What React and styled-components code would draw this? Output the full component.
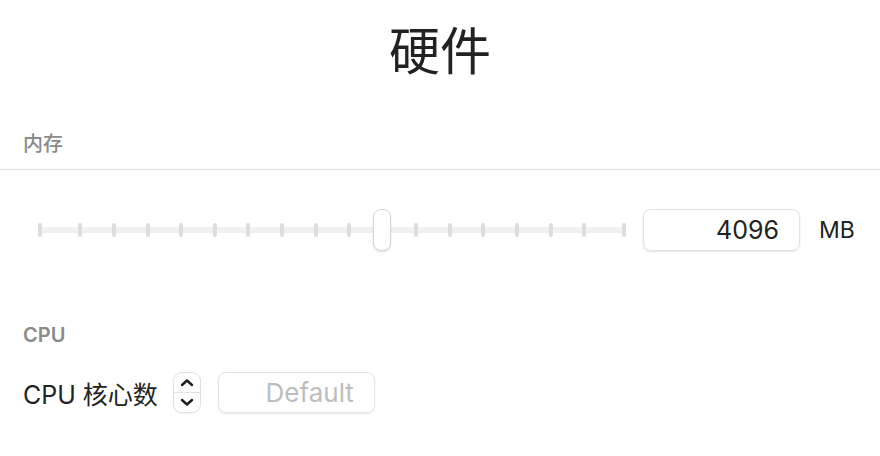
import React from 'react';
import styled, { createGlobalStyle } from 'styled-components';

const GlobalStyle = createGlobalStyle`
    html, body {
        margin:0;
        padding:0;
        background:#ffffff;
    }
    body {
        font-family:"Inter", "Noto Sans CJK SC", sans-serif;
        color:#222222;
    }
`

// tick positions on the memory slider, relative to the track start
const TICKS = [0, 40, 74, 108, 141, 175, 208, 242, 276, 309, 376, 410, 443, 477, 511, 544, 584];

function App() {
    return (
        <Page>
            <GlobalStyle />
            <Title>硬件</Title>

            <SectionHeader>内存</SectionHeader>
            <Divider />
            <SliderRow>
                <Slider>
                    <Track />
                    {TICKS.map((x) => (
                        <Tick key={x} style={{ left: x }} />
                    ))}
                    <Thumb />
                </Slider>
                <ValueBox>4096</ValueBox>
                <Unit>MB</Unit>
            </SliderRow>

            <SectionHeader cpu>CPU</SectionHeader>
            <FieldRow>
                <FieldLabel>CPU 核心数</FieldLabel>
                <Stepper>
                    <StepButton>
                        <svg width="14" height="9" viewBox="0 0 14 9">
                            <path d="M2 7 L7 2.5 L12 7" fill="none" stroke="#1e1e1e" strokeWidth="2.4" strokeLinecap="round" strokeLinejoin="round" />
                        </svg>
                    </StepButton>
                    <StepButton bottom>
                        <svg width="14" height="9" viewBox="0 0 14 9">
                            <path d="M2 2 L7 6.5 L12 2" fill="none" stroke="#1e1e1e" strokeWidth="2.4" strokeLinecap="round" strokeLinejoin="round" />
                        </svg>
                    </StepButton>
                </Stepper>
                <PlaceholderBox>Default</PlaceholderBox>
            </FieldRow>
        </Page>
    )
}

export default App;

const Page = styled.div`
    width:880px;
    height:456px;
    overflow:hidden;
    display:flex;
    flex-direction:column;
`

const Title = styled.h1`
    margin:21px 0 0;
    text-align:center;
    font-size:51px;
    font-weight:400;
    line-height:62px;
    color:#222;
`

const SectionHeader = styled.div`
    margin:${(p) => (p.cpu ? '72px' : '49px')} 0 0 23px;
    font-size:20px;
    line-height:24px;
    font-weight:${(p) => (p.cpu ? 600 : 500)};
    color:#8a8a8a;
`

const Divider = styled.div`
    margin-top:13px;
    height:1px;
    background:#dcdcdc;
`

const SliderRow = styled.div`
    display:flex;
    align-items:center;
    margin-top:39px;
    padding-left:38px;
`

const Slider = styled.div`
    position:relative;
    width:588px;
    height:42px;
`

const Track = styled.div`
    position:absolute;
    left:0;
    right:0;
    top:18px;
    height:6px;
    background:#f0f0f0;
`

const Tick = styled.div`
    position:absolute;
    top:14px;
    width:4px;
    height:14px;
    border-radius:2px;
    background:#dddddd;
`

const Thumb = styled.div`
    position:absolute;
    left:335px;
    top:0;
    width:16px;
    height:40px;
    border-radius:8px;
    background:#fff;
    border:1px solid #d6d6d6;
    box-shadow:0 1px 2px rgba(0,0,0,0.12);
`

const ValueBox = styled.div`
    margin-left:17px;
    width:135px;
    height:40px;
    padding-right:20px;
    border:1px solid #e2e2e2;
    border-radius:8px;
    box-shadow:0 1px 2px rgba(0,0,0,0.12);
    display:flex;
    align-items:center;
    justify-content:flex-end;
    font-size:25px;
    color:#222;
`

const Unit = styled.div`
    margin-left:19px;
    font-size:23px;
    color:#222;
`

const FieldRow = styled.div`
    display:flex;
    align-items:center;
    margin:25px 0 0 23px;
    height:41px;
`

const FieldLabel = styled.div`
    font-size:25px;
    color:#222;
`

const Stepper = styled.div`
    margin-left:16px;
    width:26px;
    height:39px;
    border-radius:8px;
    background:#fff;
    box-shadow:0 0 0 1px #e0e0e0, 0 1px 2px rgba(0,0,0,0.12);
    display:flex;
    flex-direction:column;
    overflow:hidden;
`

const StepButton = styled.div`
    flex:1;
    display:flex;
    align-items:center;
    justify-content:center;
    border-top:${(p) => (p.bottom ? '1px solid #e4e4e4' : 'none')};
`

const PlaceholderBox = styled.div`
    margin-left:18px;
    width:135px;
    height:39px;
    padding-right:20px;
    border:1px solid #e4e4e4;
    border-radius:8px;
    box-shadow:0 1px 2px rgba(0,0,0,0.1);
    display:flex;
    align-items:center;
    justify-content:flex-end;
    font-size:26px;
    color:#bdbdbd;
`
